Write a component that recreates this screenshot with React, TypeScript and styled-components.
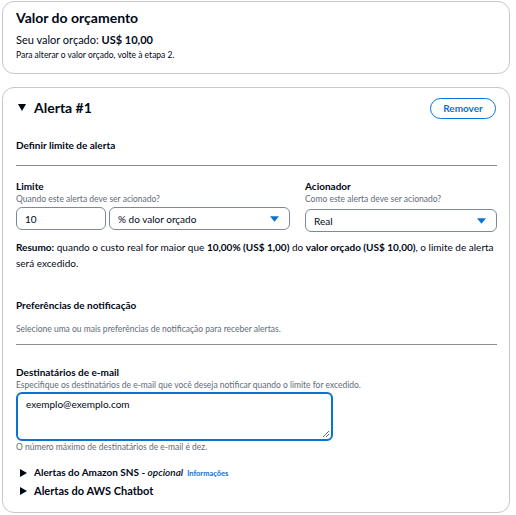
import React from "react";
import styled, { createGlobalStyle } from "styled-components";

const Global = createGlobalStyle`
  html, body { margin: 0; padding: 0; background: #ffffff; }
  body { font-family: Lato, "Noto Sans", sans-serif; color: #000716; }
  * { box-sizing: border-box; }
`;

const Page = styled.div`
  display: flex;
  flex-direction: column;
  gap: 13px;
  padding: 1px 6px 0 2px;
  width: 516px;
`;

const Card = styled.section<{ $pb?: number }>`
  border: 1px solid #c6c6cd;
  border-radius: 12px;
  background: #fff;
  padding: 6px 14px ${(p) => p.$pb ?? 12}px 13px;
  display: flex;
  flex-direction: column;
`;

const Title = styled.h2`
  margin: 0;
  font-size: 14px;
  font-weight: 700;
  line-height: 20px;
`;

const Body = styled.p<{ $mt?: number }>`
  margin: ${(p) => p.$mt ?? 0}px 0 0;
  font-size: 11px;
  line-height: 16px;
  b { font-weight: 700; }
`;

const Small = styled.p<{ $mt?: number; $muted?: boolean }>`
  margin: ${(p) => p.$mt ?? 0}px 0 0;
  font-size: 8.5px;
  line-height: 12px;
  color: ${(p) => (p.$muted ? "#5f6b7a" : "#000716")};
`;

const Header = styled.div`
  display: flex;
  align-items: center;
  justify-content: space-between;
  height: 24px;
  margin-top: 2px;
`;

const HeaderLeft = styled.div`
  display: flex;
  align-items: center;
  gap: 8px;
  padding-left: 2px;
`;

const Caret = styled.svg`
  width: 8px;
  height: 8px;
  fill: #000716;
`;

const Remover = styled.button`
  height: 21px;
  width: 66px;
  margin-right: -1px;
  border: 1.5px solid #0972d3;
  border-radius: 12px;
  background: #fff;
  color: #0972d3;
  font-family: inherit;
  font-size: 10px;
  font-weight: 700;
  padding: 0;
`;

const SectionTitle = styled.h3<{ $mt?: number }>`
  margin: ${(p) => p.$mt ?? 0}px 0 0;
  font-size: 10px;
  font-weight: 700;
  line-height: 14px;
`;

const Divider = styled.hr<{ $mt?: number }>`
  margin: ${(p) => p.$mt ?? 0}px 0 0;
  border: 0;
  border-top: 1px solid #8c8c94;
  width: 481px;
`;

const Grid = styled.div`
  display: grid;
  grid-template-columns: 274px 192px;
  column-gap: 15px;
  margin-top: 13px;
`;

const Field = styled.div`
  display: flex;
  flex-direction: column;
`;

const Label = styled.div<{ $mt?: number }>`
  margin-top: ${(p) => p.$mt ?? 0}px;
  font-size: 10px;
  font-weight: 700;
  line-height: 14px;
`;

const Desc = styled.div<{ $mt?: number }>`
  margin-top: ${(p) => p.$mt ?? 0}px;
  font-size: 8.5px;
  line-height: 12px;
  color: #5f6b7a;
`;

const Controls = styled.div`
  display: flex;
  gap: 3px;
  margin-top: 2px;
`;

const Input = styled.div<{ $w?: number; $grow?: boolean; $mt?: number }>`
  height: 23px;
  width: ${(p) => (p.$w ? `${p.$w}px` : "auto")};
  flex: ${(p) => (p.$grow ? 1 : "none")};
  margin-top: ${(p) => p.$mt ?? 0}px;
  border: 1px solid #7d8998;
  border-radius: 6px;
  display: flex;
  align-items: center;
  justify-content: space-between;
  padding: 0 10px 0 8px;
  font-size: 10px;
`;

const Arrow = styled.svg`
  width: 9px;
  height: 6px;
  fill: #0972d3;
`;

const Summary = styled.p`
  margin: 7px 0 0;
  font-size: 10px;
  line-height: 16px;
  b { font-weight: 700; }
`;

const TextArea = styled.div`
  position: relative;
  margin-top: 1px;
  width: 317px;
  height: 49px;
  border: 2px solid #0972d3;
  border-radius: 6px;
  padding: 3px 8px;
  font-size: 10px;
  line-height: 14px;
`;

const Grip = styled.svg`
  position: absolute;
  right: 1px;
  bottom: 1px;
  width: 8px;
  height: 8px;
`;

const Expand = styled.div<{ $mt?: number; $size?: number; $lh?: number }>`
  display: flex;
  align-items: baseline;
  gap: 7px;
  margin-top: ${(p) => p.$mt ?? 0}px;
  padding-left: 4px;
  font-size: ${(p) => p.$size ?? 10}px;
  font-weight: 700;
  line-height: ${(p) => p.$lh ?? 18}px;
  i { font-style: italic; font-weight: 600; }
`;

const SideCaret = styled.svg`
  width: 7px;
  height: 8px;
  fill: #000716;
  align-self: center;
`;

const Info = styled.span`
  color: #0972d3;
  font-size: 7.5px;
  font-weight: 700;
  margin-left: -3px;
`;

const DownArrow = () => (
  <Arrow viewBox="0 0 10 6">
    <path d="M0 0h10L5 6z" />
  </Arrow>
);

const RightCaret = () => (
  <SideCaret viewBox="0 0 7 8">
    <path d="M0 0l7 4-7 4z" />
  </SideCaret>
);

export default function App() {
  return (
    <>
      <Global />
      <Page>
        <Card $pb={12}>
          <Title>Valor do orçamento</Title>
          <Body $mt={4}>
            Seu valor orçado: <b>US$ 10,00</b>
          </Body>
          <Small $mt={1}>Para alterar o valor orçado, volte à etapa 2.</Small>
        </Card>

        <Card $pb={12}>
          <Header>
            <HeaderLeft>
              <Caret viewBox="0 0 8 8">
                <path d="M0 0h8L4 7z" />
              </Caret>
              <Title>Alerta #1</Title>
            </HeaderLeft>
            <Remover>Remover</Remover>
          </Header>

          <SectionTitle $mt={18}>Definir limite de alerta</SectionTitle>
          <Divider $mt={13} />

          <Grid>
            <Field>
              <Label>Limite</Label>
              <Desc>Quando este alerta deve ser acionado?</Desc>
              <Controls>
                <Input $w={90}>10</Input>
                <Input $grow>
                  % do valor orçado
                  <DownArrow />
                </Input>
              </Controls>
            </Field>
            <Field>
              <Label>Acionador</Label>
              <Desc>Como este alerta deve ser acionado?</Desc>
              <Input $mt={4}>
                Real
                <DownArrow />
              </Input>
            </Field>
          </Grid>

          <Summary>
            <b>Resumo:</b> quando o custo real for maior que <b>10,00% (US$ 1,00)</b> do{" "}
            <b>valor orçado (US$ 10,00)</b>, o limite de alerta será excedido.
          </Summary>

          <SectionTitle $mt={27}>Preferências de notificação</SectionTitle>
          <Small $mt={11} $muted>
            Selecione uma ou mais preferências de notificação para receber alertas.
          </Small>
          <Divider $mt={9} />

          <Label $mt={20}>Destinatários de e-mail</Label>
          <Desc>
            Especifique os destinatários de e-mail que você deseja notificar quando o limite for excedido.
          </Desc>
          <TextArea>
            exemplo@exemplo.com
            <Grip viewBox="0 0 8 8">
              <path d="M7 1L1 7M7 4L4 7" stroke="#5f6b7a" strokeWidth="1" />
            </Grip>
          </TextArea>
          <Small $mt={0} $muted>
            O número máximo de destinatários de e-mail é dez.
          </Small>

          <Expand $mt={11} $lh={16}>
            <RightCaret />
            <span>
              Alertas do Amazon SNS - <i>opcional</i>
            </span>
            <Info>Informações</Info>
          </Expand>
          <Expand $mt={0} $size={11}>
            <RightCaret />
            <span>Alertas do AWS Chatbot</span>
          </Expand>
        </Card>
      </Page>
    </>
  );
}
